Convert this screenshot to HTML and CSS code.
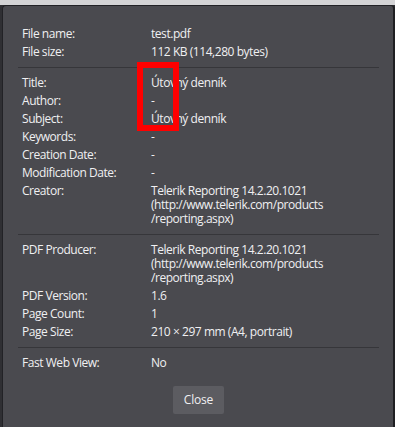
FILE: index.html
```html
<!DOCTYPE html>
<html lang="en">
<head>
<meta charset="utf-8">
<title>Document Properties</title>
<link rel="stylesheet" href="styles.css">
</head>
<body>
<div class="topbar"></div>
<div class="stage">
  <div class="dialog">
    <div class="section">
      <div class="row"><span class="label">File name:</span><span class="value">test.pdf</span></div>
      <div class="row"><span class="label">File size:</span><span class="value">112 KB (114,280 bytes)</span></div>
    </div>
    <div class="separator"></div>
    <div class="section">
      <div class="row"><span class="label">Title:</span><span class="value">Útovný denník</span></div>
      <div class="row"><span class="label">Author:</span><span class="value">-</span></div>
      <div class="row"><span class="label">Subject:</span><span class="value">Útovný denník</span></div>
      <div class="row"><span class="label">Keywords:</span><span class="value">-</span></div>
      <div class="row"><span class="label">Creation Date:</span><span class="value">-</span></div>
      <div class="row"><span class="label">Modification Date:</span><span class="value">-</span></div>
      <div class="row"><span class="label">Creator:</span><span class="value">Telerik Reporting 14.2.20.1021<br>(http://www.telerik.com/products<br>/reporting.aspx)</span></div>
    </div>
    <div class="separator"></div>
    <div class="section">
      <div class="row"><span class="label">PDF Producer:</span><span class="value">Telerik Reporting 14.2.20.1021<br>(http://www.telerik.com/products<br>/reporting.aspx)</span></div>
      <div class="row"><span class="label">PDF Version:</span><span class="value">1.6</span></div>
      <div class="row"><span class="label">Page Count:</span><span class="value">1</span></div>
      <div class="row"><span class="label">Page Size:</span><span class="value">210 × 297 mm (A4, portrait)</span></div>
    </div>
    <div class="separator"></div>
    <div class="section">
      <div class="row"><span class="label">Fast Web View:</span><span class="value">No</span></div>
    </div>
    <div class="buttonRow"><button class="overlayButton">Close</button></div>
  </div>
  <div class="highlight"></div>
</div>
</body>
</html>
```
FILE: styles.css
```css
html, body {
  margin: 0;
  padding: 0;
  height: 100%;
  overflow: hidden;
}

body {
  background: #2f2f33;
  font-family: "Open Sans", "Noto Sans", sans-serif;
}

.topbar {
  height: 5px;
  background: #d4d4d6;
}

.stage {
  position: relative;
  padding-left: 2px;
}

.dialog {
  box-sizing: border-box;
  width: 393px;
  background: #4a4a4f;
  border: 1px solid #222226;
  border-right: 2px solid #1f1f22;
  border-radius: 4px 4px 0 0;
  padding: 17px 14px 20px 15px;
  color: #f0f0f2;
  font-size: 12px;
  line-height: 14px;
  letter-spacing: -0.45px;
}

.section {
  display: flex;
  flex-direction: column;
  gap: 4px;
  padding: 4px;
}

.row {
  display: grid;
  grid-template-columns: 125px 1fr;
  column-gap: 4px;
}

.label, .value {
  white-space: nowrap;
}

.separator {
  height: 1px;
  margin: 4px 0;
  background: #36363a;
}

.buttonRow {
  display: flex;
  justify-content: center;
  margin-top: 12px;
}

.overlayButton {
  box-sizing: border-box;
  width: 51px;
  height: 28px;
  padding: 0;
  border: 0;
  border-radius: 2px;
  background: #5c5c61;
  color: #f0f0f2;
  font-family: inherit;
  font-size: 12px;
  line-height: 14px;
  letter-spacing: -0.2px;
}

.highlight {
  position: absolute;
  left: 137px;
  top: 57px;
  width: 42px;
  height: 69px;
  box-sizing: border-box;
  border: 6px solid #ff0000;
}
```
